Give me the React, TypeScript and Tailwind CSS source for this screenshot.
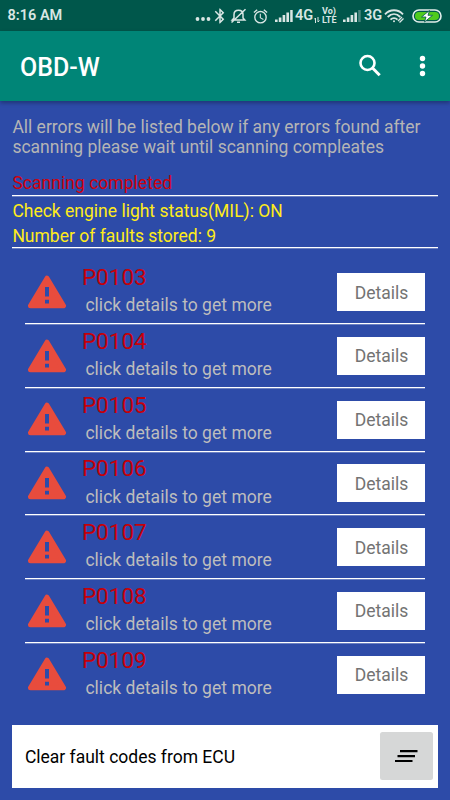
import { useState } from 'react'
import { MdBluetooth, MdOutlineAlarm } from 'react-icons/md'

interface Fault {
  code: string
  hint: string
}

const faults: Fault[] = [
  'P0103',
  'P0104',
  'P0105',
  'P0106',
  'P0107',
  'P0108',
  'P0109',
].map((code) => ({ code, hint: 'click details to get more' }))

function SignalBars({ weak = false }: { weak?: boolean }) {
  return (
    <svg width="18" height="14" viewBox="0 0 18 14" fill="currentColor">
      <path d="M0 10.5h2.6V13H0zM3.8 8.5h2.6V13H3.8zM7.6 6h2.6v7H7.6zM11.4 3.5H14V13h-2.6z" />
      <path d="M15.2 1h2.5v12h-2.5z" opacity={weak ? 0.35 : 1} />
    </svg>
  )
}

function StatusBar() {
  return (
    <div className="flex h-[31px] shrink-0 items-center bg-[#00574b] pl-[7.5px] pt-[1px] text-[#d9e6e4]">
      <span className="w-[187.5px] text-[14.5px] font-semibold leading-none">
        8:16 AM
      </span>
      <svg width="16" height="14" viewBox="0 0 16 14" fill="currentColor">
        <circle cx="2.5" cy="10" r="1.9" />
        <circle cx="8" cy="10" r="1.9" />
        <circle cx="13.5" cy="10" r="1.9" />
      </svg>
      <MdBluetooth className="h-[18px] w-[18px]" />
      <svg
        className="ml-[1px]"
        width="17"
        height="16"
        viewBox="0 0 17 16"
        fill="none"
        stroke="currentColor"
        strokeWidth="1.5"
      >
        <path d="M2.2 12h12.6l-1.8-2V6.5C13 4 11.3 2.2 8.5 2.2S4 4 4 6.5V10zM7 14.3h3M15.5 1.2 1.5 14.5" />
      </svg>
      <MdOutlineAlarm className="ml-[5px] h-[17px] w-[17px]" />
      <span className="ml-[6px]">
        <SignalBars />
      </span>
      <span className="ml-[2px] w-[19px] text-[14.5px] font-semibold leading-none">
        4G
      </span>
      <svg
        width="6"
        height="8"
        viewBox="0 0 6 8"
        className="mt-[7px]"
        fill="none"
        stroke="currentColor"
      >
        <path d="M1.5 7V2M0 3.5 1.5 2M4 1v5M5.5 4.5 4 6" />
      </svg>
      <span className="ml-[2px] flex w-[17px] flex-col text-[9px] font-bold leading-[9px]">
        <span className="h-[9px]">Vo)</span>
        <span className="h-[9px]">LTE</span>
      </span>
      <span className="ml-[4px]">
        <SignalBars weak />
      </span>
      <span className="ml-[3px] w-[20px] text-[14.5px] font-semibold leading-none">
        3G
      </span>
      <svg
        width="21"
        height="16"
        viewBox="0 0 21 16"
        fill="none"
        stroke="currentColor"
        strokeWidth="1.9"
      >
        <path d="M1 6.3C6 .9 14 .9 19 6.3M3.7 9c3.8-3.8 8.8-3.8 12.6 0M6.500 11.600c2-2 5-2 7 0" />
        <circle cx="10" cy="13.2" r="1" fill="currentColor" stroke="none" />
        <path d="m14 13 4-4M15.5 14.5l4-4" strokeWidth="1.3" />
      </svg>
      <svg className="ml-[7px] mt-[-1px]" width="30" height="14" viewBox="0 0 30 14">
        <rect x="1" y="1" width="28" height="12" rx="6" fill="#00574b" stroke="#e3eeec" strokeWidth="1.6" />
        <rect x="3" y="3" width="24" height="8" rx="4" fill="#4fcb1d" />
        <path
          d="m17.5 1.5-8 6.5H14l-1.500 5 8-6.700H16z"
          fill="#fff"
          stroke="#00574b"
          strokeWidth=".8"
        />
      </svg>
    </div>
  )
}

function Toolbar() {
  return (
    <header className="z-10 flex h-[70px] shrink-0 items-center justify-between bg-[#008577] pl-5 pr-[22px] text-white shadow-[0_2px_4px_rgba(0,0,0,0.3)]">
      <h1 className="mt-[3px] text-[25px] font-medium leading-none">OBD-W</h1>
      <div className="flex items-center gap-[35px]">
        <button type="button" aria-label="Search">
          <svg width="24" height="24" viewBox="0 0 24 24" fill="none" stroke="currentColor">
            <circle cx="9.5" cy="9" r="7" strokeWidth="2.6" />
            <path d="m14.500 14 7.200 7.200" strokeWidth="3" />
          </svg>
        </button>
        <button type="button" aria-label="More options">
          <svg width="11" height="22" viewBox="0 0 11 22" fill="currentColor">
            <circle cx="5.5" cy="3.5" r="2.7" />
            <circle cx="5.5" cy="11" r="2.7" />
            <circle cx="5.5" cy="18.5" r="2.7" />
          </svg>
        </button>
      </div>
    </header>
  )
}

function WarningIcon() {
  return (
    <svg width="40" height="34" viewBox="0 0 40 34">
      <path
        d="M20 3.200 36.500 30.800h-33z"
        fill="#e84c3d"
        stroke="#e84c3d"
        strokeWidth="5"
        strokeLinejoin="round"
      />
      <path d="M18 12h4v9.500h-4zM18 24.800h4v3.700h-4z" fill="#2d4ba8" />
    </svg>
  )
}

function FaultRow({ fault, last }: { fault: Fault; last: boolean }) {
  return (
    <li
      className={`flex h-[63.75px] border-b ${
        last
          ? 'border-transparent'
          : 'border-white shadow-[0_1px_0_rgba(255,255,255,0.3)]'
      }`}
    >
      <div className="ml-[2px] mt-[14.5px]">
        <WarningIcon />
      </div>
      <div className="ml-[15px] mt-[3.6px] flex-1">
        <p className="text-[22.5px] leading-[26px] text-[#c60008]">
          {fault.code}
        </p>
        <p className="ml-[3.5px] mt-[5.2px] leading-[20.5px] tracking-[0.03px] text-[#bdbdbd]">
          {fault.hint}
        </p>
      </div>
      <button
        type="button"
        className="mt-[12.7px] h-[38px] w-[88px] bg-white pl-[1px] pt-[1px] text-[#737373]"
      >
        Details
      </button>
    </li>
  )
}

function App() {
  const [items] = useState(faults)

  return (
    <div className="flex h-[800px] w-[450px] flex-col overflow-hidden bg-[#2d4ba8] font-['Roboto',sans-serif] text-[17.5px]">
      <StatusBar />
      <Toolbar />
      <main className="flex flex-1 flex-col px-[12.4px] pt-[15.5px]">
        <p className="leading-[20.5px] tracking-[-0.01px] text-[#b5b5b5]">
          All errors will be listed below if any errors found after scanning
          please wait until scanning compleates
        </p>
        <p className="mt-[15.5px] h-[23.2px] shrink-0 border-b border-white leading-[20.5px] tracking-[0.03px] text-[#d0000c] shadow-[0_1px_0_rgba(255,255,255,0.3)]">
          Scanning completed
        </p>
        <div className="h-[52px] shrink-0 border-b border-white pt-[2.6px] leading-[25px] text-[#ffeb1a] shadow-[0_1px_0_rgba(255,255,255,0.3)]">
          <p>Check engine light status(MIL): ON</p>
          <p>Number of faults stored: 9</p>
        </div>
        <ul className="mx-[12.5px] mt-[12.3px]">
          {items.map((fault, index) => (
            <FaultRow
              key={fault.code}
              fault={fault}
              last={index === items.length - 1}
            />
          ))}
        </ul>
        <footer className="mb-[12.5px] mt-auto flex h-[62.5px] shrink-0 items-center justify-between bg-white pl-[12.5px] pr-[5px] text-black">
          <span className="pt-px">Clear fault codes from ECU</span>
          <button
            type="button"
            aria-label="Clear fault codes"
            className="flex h-[48px] w-[53px] items-center justify-center rounded-[2.5px] bg-[#d6d7d7]"
          >
            <svg width="23" height="12" viewBox="0 0 23 12" fill="currentColor">
              <path d="M5 0h17.500v2.200H5zM2.500 5H20v2.200H2.500zM0 10h17.500v2.200H0z" />
            </svg>
          </button>
        </footer>
      </main>
    </div>
  )
}

export default App
